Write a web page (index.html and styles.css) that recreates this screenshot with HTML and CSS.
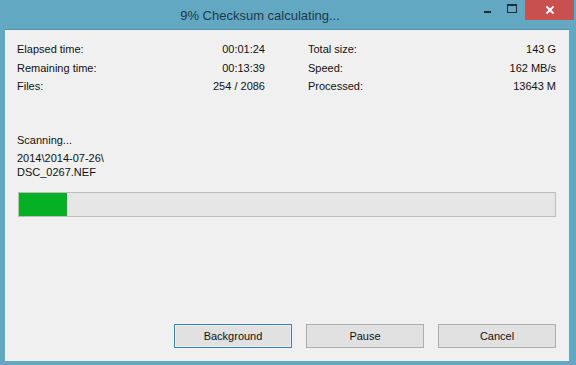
FILE: index.html
```html
<!DOCTYPE html>
<html>
<head>
<meta charset="utf-8">
<link rel="stylesheet" href="styles.css">
</head>
<body>
<div class="window">
  <div class="titlebar">
    <div class="title">9% Checksum calculating...</div>
    <div class="caption">
      <div class="cap-btn min"><span class="dash"></span></div>
      <div class="cap-btn max"><span class="box"></span></div>
      <div class="cap-btn close">
        <svg width="10" height="10" viewBox="0 0 10 10"><path d="M1.5 1.5 L8.5 8.5 M8.5 1.5 L1.5 8.5" stroke="#fff" stroke-width="1.8" fill="none"/></svg>
      </div>
    </div>
  </div>
  <div class="client">
    <div class="stats">
      <div class="col">
        <div class="row"><span>Elapsed time:</span><span>00:01:24</span></div>
        <div class="row"><span>Remaining time:</span><span>00:13:39</span></div>
        <div class="row"><span>Files:</span><span>254 / 2086</span></div>
      </div>
      <div class="col">
        <div class="row"><span>Total size:</span><span>143 G</span></div>
        <div class="row"><span>Speed:</span><span>162 MB/s</span></div>
        <div class="row"><span>Processed:</span><span>13643 M</span></div>
      </div>
    </div>
    <div class="status">Scanning...</div>
    <div class="path">2014\2014-07-26\<br>DSC_0267.NEF</div>
    <div class="progress"><div class="fill" style="width:9%"></div></div>
    <div class="buttons">
      <div class="btn default">Background</div>
      <div class="btn">Pause</div>
      <div class="btn">Cancel</div>
    </div>
  </div>
</div>
</body>
</html>
```
FILE: styles.css
```css
html, body {
  margin: 0;
  padding: 0;
}
body {
  width: 576px;
  height: 365px;
  overflow: hidden;
  font-family: "Liberation Sans", Arial, sans-serif;
}
.window {
  width: 576px;
  height: 365px;
  box-sizing: border-box;
  background: #63a8c3;
  padding: 0 7px 4px 5px;
  display: flex;
  flex-direction: column;
}
.titlebar {
  height: 29px;
  position: relative;
  display: flex;
  align-items: center;
  justify-content: center;
  padding-right: 56px;
  margin-left: -5px;
  margin-right: -7px;
}
.title {
  font-size: 13px;
  color: #1d3848;
  margin-top: 1px;
}
.caption {
  position: absolute;
  top: 0;
  right: 2px;
  display: flex;
  align-items: flex-start;
}
.cap-btn {
  height: 20px;
  display: flex;
  align-items: center;
  justify-content: center;
}
.min {
  width: 26px;
  align-items: flex-start;
}
.dash {
  display: block;
  width: 7px;
  height: 2px;
  background: #1d2c38;
  margin-top: 11px;
}
.max {
  width: 24px;
  margin-right: 1px;
  align-items: flex-start;
}
.box {
  display: block;
  width: 8px;
  height: 6px;
  border: 1px solid #1d2c38;
  border-top-width: 2px;
  margin-top: 4px;
}
.close {
  width: 49px;
  background: #c8504f;
}
.client {
  flex: 1;
  background: #f0f0f0;
  border-top: 1px solid #5590a8;
  padding: 10px 13px 13px 12px;
  display: flex;
  flex-direction: column;
  font-size: 11px;
  color: #111;
}
.stats {
  display: grid;
  grid-template-columns: 248px 248px;
  column-gap: 43px;
}
.row {
  display: flex;
  justify-content: space-between;
  height: 18.5px;
  line-height: 18px;
}
.status {
  margin-top: 37px;
  line-height: 14px;
}
.path {
  margin-top: 4px;
  line-height: 14px;
}
.progress {
  margin-top: 13px;
  margin-left: 1px;
  height: 25px;
  box-sizing: border-box;
  border: 1px solid #bcbcbc;
  background: #e6e6e6;
}
.fill {
  height: 100%;
  background: #06b025;
}
.buttons {
  margin-top: auto;
  display: flex;
  justify-content: flex-end;
  gap: 14px;
}
.btn {
  width: 118px;
  height: 24px;
  box-sizing: border-box;
  border: 1px solid #adadad;
  background: #e1e1e1;
  display: flex;
  align-items: center;
  justify-content: center;
  color: #111;
  padding-bottom: 1px;
}
.btn.default {
  border-color: #3c7fb1;
  box-shadow: inset 0 0 0 1px #e5f1fb;
}
```
